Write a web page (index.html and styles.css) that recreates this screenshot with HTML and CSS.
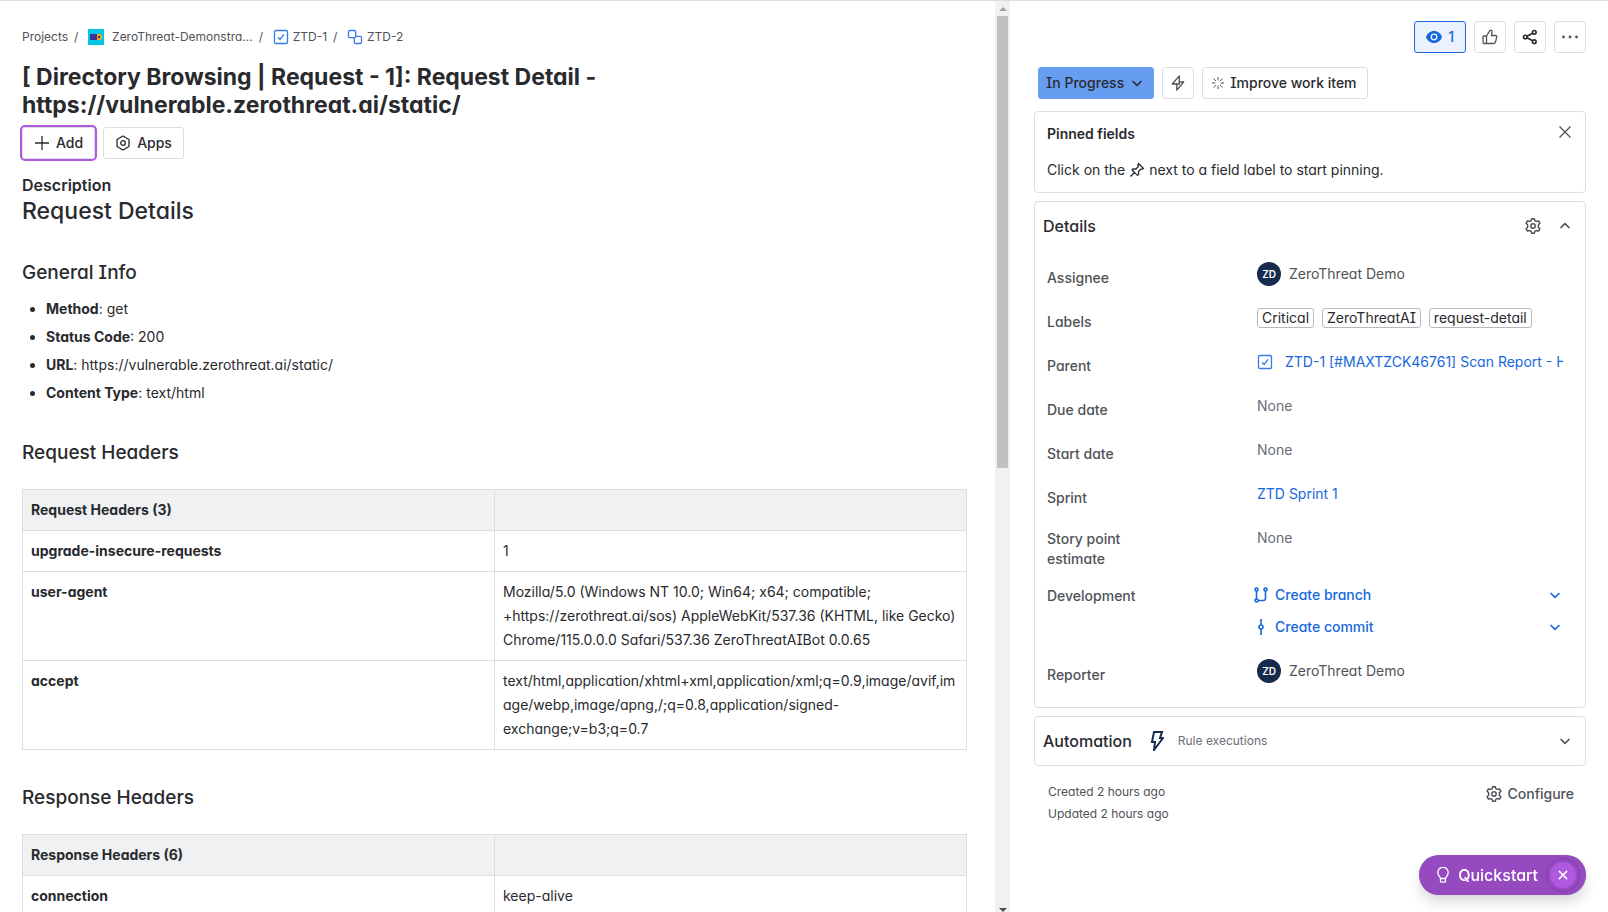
FILE: index.html
```html
<!DOCTYPE html>
<html lang="en">
<head>
<meta charset="utf-8">
<title>ZTD-2</title>
<link rel="stylesheet" href="styles.css">
</head>
<body>
<svg class="defs" aria-hidden="true">
  <symbol id="gear" viewBox="1 1 14 14"><path d="M6.900 1.600h2.200l.5 1.700 1.300.7 1.900-.5 1.200 2-1.300 1.400v2.200l1.300 1.400-1.200 2-1.900-.5-1.300.7-.5 1.700H6.900l-.5-1.700-1.300-.7-1.900.5-1.200-2 1.300-1.400V6.900L2 5.500l1.200-2 1.900.5 1.300-.7z" stroke-linejoin="round"/><circle cx="8" cy="8" r="1.900"/></symbol>
  <symbol id="down" viewBox="0 0 16 16"><path d="M3.500 6 8 10.300 12.500 6"/></symbol>
  <symbol id="up" viewBox="0 0 16 16"><path d="M3.500 10 8 5.700 12.500 10"/></symbol>
  <symbol id="close" viewBox="0 0 16 16"><path d="m2.500 2.500 11 11m0-11-11 11"/></symbol>
  <symbol id="task" viewBox="0 0 16 16"><rect x="1.500" y="1.500" width="13" height="13" rx="1.300"/><path d="m5 8.300 2.100 2.200L11 5.400"/></symbol>
</svg>
<div class="app">
  <main class="issue">
    <nav class="crumbs" aria-label="Breadcrumbs">
      <a href="#">Projects</a><span class="slash">/</span>
      <svg class="project" viewBox="0 0 16 16"><rect width="16" height="16" fill="#00c7e5"/><rect x="2" y="5" width="7" height="6" fill="#403294"/><path d="M9 5h2a3 3 0 0 1 0 6H9z" fill="#ffab00"/><circle cx="11" cy="8" r="1.200" fill="#403294"/></svg>
      <a class="crumb-project" href="#">ZeroThreat-Demonstra...</a><span class="slash">/</span>
      <svg class="icon blue" viewBox="0 0 16 16"><use href="#task"/></svg>
      <a href="#">ZTD-1</a><span class="slash">/</span>
      <svg class="icon blue" viewBox="0 0 16 16"><path d="M8.700 6V2.700a1.200 1.200 0 0 0-1.200-1.200H2.700a1.200 1.200 0 0 0-1.200 1.200v4.800a1.200 1.200 0 0 0 1.200 1.200h6.100M7.300 10v3.300a1.200 1.200 0 0 0 1.200 1.200h4.800a1.200 1.200 0 0 0 1.200-1.200V8.500a1.200 1.200 0 0 0-1.200-1.200H8.700V6M7.300 10V8.700"/></svg>
      <a href="#">ZTD-2</a>
    </nav>
    <h1>[ Directory Browsing | Request - 1]: Request Detail - https://vulnerable.zerothreat.ai/static/</h1>
    <div class="actions">
      <button class="btn focused"><svg class="icon" viewBox="0 0 16 16"><path d="M8 1v14M1 8h14"/></svg>Add</button>
      <button class="btn"><svg class="icon" viewBox="0 0 16 16"><path d="m8 1 6 3.500v7L8 15l-6-3.500v-7z" stroke-linejoin="round"/><circle cx="8" cy="8" r="2.300"/></svg>Apps</button>
    </div>
    <h2 class="label">Description</h2>
    <h2 class="doc-title">Request Details</h2>
    <h3>General Info</h3>
    <ul>
      <li><strong>Method</strong>: get</li>
      <li><strong>Status Code</strong>: 200</li>
      <li><strong>URL</strong>: https://vulnerable.zerothreat.ai/static/</li>
      <li><strong>Content Type</strong>: text/html</li>
    </ul>
    <h3>Request Headers</h3>
    <table>
      <tr><th class="head">Request Headers (3)</th><th class="head"></th></tr>
      <tr><th>upgrade-insecure-requests</th><td>1</td></tr>
      <tr><th>user-agent</th><td>Mozilla/5.0 (Windows NT 10.0; Win64; x64; compatible; +https://zerothreat.ai/sos) AppleWebKit/537.36 (KHTML, like Gecko) Chrome/115.0.0.0 Safari/537.36 ZeroThreatAIBot 0.0.65</td></tr>
      <tr><th>accept</th><td>text/html,application/xhtml+xml,application/xml;q=0.9,image/avif,image/webp,image/apng,/;q=0.8,application/signed-exchange;v=b3;q=0.7</td></tr>
    </table>
    <h3>Response Headers</h3>
    <table>
      <tr><th class="head">Response Headers (6)</th><th class="head"></th></tr>
      <tr><th>connection</th><td>keep-alive</td></tr>
    </table>
  </main>
  <div class="scrollbar" aria-hidden="true"><span class="arrow-up"></span><span class="thumb"></span><span class="arrow-down"></span></div>
  <aside class="side">
    <div class="toolbar">
      <button class="btn watching"><svg class="icon" viewBox="0 0 16 16"><path d="M8 2C4 2 1.300 4.500 0 8c1.300 3.500 4 6 8 6s6.700-2.500 8-6c-1.300-3.500-4-6-8-6z" fill="currentColor" stroke="none"/><circle cx="8" cy="8" r="2.800" stroke="#e9f2fe"/></svg>1</button>
      <button class="btn square" aria-label="Like"><svg class="icon" viewBox="0 0 16 16"><path d="M4.500 7H2a1 1 0 0 0-1 1v5.500a1 1 0 0 0 1 1h9.500a2 2 0 0 0 2-1.600l1.200-4.700A1.200 1.200 0 0 0 13.500 6.500H9.500l.6-3.600C10.300 1.500 8.500.6 7.700 1.900L4.500 7v7.500" stroke-linejoin="round"/></svg></button>
      <button class="btn square dark" aria-label="Share"><svg class="icon bold" viewBox="0 0 16 16"><circle cx="3.300" cy="8" r="1.800"/><circle cx="12.300" cy="3.300" r="1.800"/><circle cx="12.300" cy="12.700" r="1.800"/><path d="m5 7.200 5.700-3M5 8.800l5.700 3"/></svg></button>
      <button class="btn square" aria-label="More actions"><svg class="icon" viewBox="0 0 16 16"><g fill="currentColor" stroke="none"><circle cx="1.500" cy="8" r="1.400"/><circle cx="8" cy="8" r="1.400"/><circle cx="14.500" cy="8" r="1.400"/></g></svg></button>
    </div>
    <div class="status-row">
      <button class="btn status">In Progress<svg class="icon chev" viewBox="0 0 16 16"><use href="#down"/></svg></button>
      <button class="btn square" aria-label="Automation"><svg class="icon" viewBox="0 0 16 16"><path d="M9.300.8 2.300 9h4.500v6.200L13.700 7H9.300z" stroke-linejoin="round"/><path d="M6.800 9h2.500V7"/></svg></button>
      <button class="btn improve"><svg class="icon small" viewBox="0 0 16 16"><path d="M8 0v4.500M8 11.500V16M0 8h4.500M11.500 8H16M2 2l3.500 3.500M10.500 10.500 14 14M2 14l3.500-3.500M10.500 5.500 14 2"/></svg>Improve work item</button>
    </div>
    <section class="panel pinned">
      <div class="pinned-head"><h2>Pinned fields</h2><button class="plain" aria-label="Close"><svg class="icon" viewBox="0 0 16 16"><use href="#close"/></svg></button></div>
      <p>Click on the <svg class="icon pin" viewBox="0 0 16 16"><path d="m9.500 1.500 5 5-1.500.8-1-.3-2.500 2.500.2 2.700-1.200 1.200L3 8l1.200-1.200 2.700.2L9.400 4.500l-.5-1.300zM5.500 10.500 1.500 14.500" stroke-linejoin="round"/></svg> next to a field label to start pinning.</p>
    </section>
    <section class="panel details">
      <header class="panel-head"><h2>Details</h2><button class="plain push" aria-label="Settings"><svg class="icon" viewBox="0 0 16 16"><use href="#gear"/></svg></button><button class="plain" aria-label="Collapse"><svg class="icon chev" viewBox="0 0 16 16"><use href="#up"/></svg></button></header>
      <dl>
        <div class="field"><dt>Assignee</dt><dd><span class="avatar">ZD</span>ZeroThreat Demo</dd></div>
        <div class="field"><dt>Labels</dt><dd class="tags"><span class="tag">Critical</span><span class="tag">ZeroThreatAI</span><span class="tag">request-detail</span></dd></div>
        <div class="field"><dt>Parent</dt><dd class="parent"><svg class="icon blue" viewBox="0 0 16 16"><use href="#task"/></svg><a href="#">ZTD-1 [#MAXTZCK46761] Scan Report - H</a></dd></div>
        <div class="field"><dt>Due date</dt><dd class="none">None</dd></div>
        <div class="field"><dt>Start date</dt><dd class="none">None</dd></div>
        <div class="field"><dt>Sprint</dt><dd><a href="#">ZTD Sprint 1</a></dd></div>
        <div class="field tall"><dt>Story point estimate</dt><dd class="none">None</dd></div>
        <div class="field dev"><dt>Development</dt><dd>
          <div class="dev-row"><a href="#"><svg class="icon bold" viewBox="0 0 16 16"><circle cx="3.500" cy="2.500" r="1.500"/><circle cx="12.500" cy="2.500" r="1.500"/><circle cx="3.500" cy="13.500" r="1.500"/><path d="M3.500 4v8M12.500 4v7.500a2 2 0 0 1-2 2H5"/></svg>Create branch</a><button class="plain" aria-label="Branch options"><svg class="icon chev" viewBox="0 0 16 16"><use href="#down"/></svg></button></div>
          <div class="dev-row"><a href="#"><svg class="icon bold" viewBox="0 0 16 16"><circle cx="8" cy="8" r="2"/><path d="M8 0v6M8 10v6"/></svg>Create commit</a><button class="plain" aria-label="Commit options"><svg class="icon chev" viewBox="0 0 16 16"><use href="#down"/></svg></button></div>
        </dd></div>
        <div class="field"><dt>Reporter</dt><dd><span class="avatar">ZD</span>ZeroThreat Demo</dd></div>
      </dl>
    </section>
    <section class="panel automation">
      <h2>Automation</h2>
      <svg class="bolt" viewBox="0 0 14 20"><path d="M4 1h8l-2 6h3L4 19l1-8H2z"/></svg>
      <span class="rule">Rule executions</span>
      <button class="plain push" aria-label="Expand"><svg class="icon chev" viewBox="0 0 16 16"><use href="#down"/></svg></button>
    </section>
    <footer class="meta">
      <div><p>Created 2 hours ago</p><p>Updated 2 hours ago</p></div>
      <button class="plain configure"><svg class="icon" viewBox="0 0 16 16"><use href="#gear"/></svg>Configure</button>
    </footer>
  </aside>
</div>
<div class="quickstart">
  <button class="plain qs-open"><svg class="icon" viewBox="0 0 16 16"><path d="M5.500 11.500c0-1.500-2.700-3-2.700-6a5.200 5.200 0 0 1 10.400 0c0 3-2.700 4.500-2.700 6zM5.500 12v2.200a1 1 0 0 0 1 1h3a1 1 0 0 0 1-1V12" stroke-linejoin="round"/></svg>Quickstart</button>
  <button class="qs-close" aria-label="Dismiss"><svg class="icon" viewBox="0 0 16 16"><use href="#close"/></svg></button>
</div>
</body>
</html>
```

FILE: styles.css
```css
* { box-sizing: border-box; }
body {
  margin: 0;
  background: #fff;
  color: #292a2e;
  font: 400 14px/20px Inter, "Liberation Sans", sans-serif;
  font-feature-settings: "cv11", "cv08";
}
h1, h2, h3, p, ul, dl, dd { margin: 0; }
button { font: inherit; font-feature-settings: inherit; color: inherit; }
a { color: #1868db; text-decoration: none; }
.defs { position: absolute; width: 0; height: 0; }
.icon { width: 16px; height: 16px; flex: none; fill: none; stroke: currentColor; stroke-width: 1.3; }
.icon.bold { stroke-width: 1.6; }
.icon.small { width: 12px; height: 12px; color: #505258; }
.icon.chev { stroke-width: 1.6; }
.blue { color: #357de8; }

.app { display: flex; height: 100vh; overflow: hidden; border-top: 1px solid #ddd; }
.issue { flex: 1; min-width: 0; padding: 26px 28px 0 22px; overflow: hidden; }

.crumbs { display: flex; align-items: center; height: 20px; font-size: 12px; }
.crumbs a { color: #505258; }
.crumbs .icon { margin-right: 4px; }
.crumbs .project { width: 16px; height: 16px; margin-right: 8px; }
.slash { width: 20px; padding-left: 6px; color: #505258; }
h1 { max-width: 640px; margin-top: 16px; font-size: 23px; line-height: 28px; font-weight: 650; }

.btn {
  display: inline-flex; align-items: center; justify-content: center; gap: 6px;
  height: 32px; padding: 0 11px; border: 1px solid #dddee1; border-radius: 3px;
  background: #fff; font-weight: 500;
}
.btn.square { width: 32px; padding: 0; color: #505258; }
.btn.dark { color: #292a2e; }
.actions { display: flex; gap: 8px; margin-top: 8px; }
.focused { outline: 2px solid #af59e1; }
.label { margin-top: 16px; font-size: 16px; line-height: 20px; font-weight: 600; }
.doc-title { margin-top: 2px; font-size: 23px; line-height: 28px; font-weight: 500; }
h3 { margin-top: 36px; font-size: 19px; line-height: 24px; font-weight: 500; }
ul { margin-top: 12px; padding-left: 24px; line-height: 24px; }
li + li { margin-top: 4px; }
strong { font-weight: 650; }

table { width: 100%; margin-top: 24px; border-collapse: collapse; table-layout: fixed; line-height: 24px; }
th, td { height: 41px; padding: 8px; border: 1px solid #dddee1; text-align: left; vertical-align: top; overflow-wrap: anywhere; }
th { font-weight: 650; }
.head { background: #f0f1f2; }

.scrollbar { display: flex; flex-direction: column; align-items: center; width: 15px; background: #f1f1f1; }
.arrow-up { margin: 6px 0 5px; border: 4px solid transparent; border-top: 0; border-bottom-color: #a3a3a3; }
.thumb { width: 11px; height: calc(50% - 4px); background: #c1c1c1; }
.arrow-down { margin-top: auto; border: 4px solid transparent; border-bottom: 0; border-top-color: #505050; }

.side { width: 598px; padding: 20px 22px 0 24px; }
.toolbar { display: flex; justify-content: flex-end; gap: 8px; }
.watching { border-color: #1868db; background: #e9f2fe; color: #1868db; }
.status-row { display: flex; gap: 8px; margin: 14px 0 12px; padding-left: 4px; }
.status { gap: 5px; border-color: #669df1; background: #669df1; padding: 0 8px 0 7px; }
.improve { padding: 0 10px 0 9px; }

.panel { margin-bottom: 8px; border: 1px solid #dddee1; border-radius: 4px; }
.pinned { padding: 10px 12px 12px; }
.pinned-head { display: flex; justify-content: space-between; }
.pinned-head h2 { margin-top: 2px; font-size: 14px; line-height: 20px; font-weight: 600; }
.pinned p { margin-top: 16px; }
.pin { vertical-align: -3px; }
.plain { display: inline-flex; align-items: center; gap: 8px; padding: 0; border: 0; background: none; color: #505258; }
.pinned-head .plain { height: 20px; }
.push { margin-left: auto; }
.panel-head { display: flex; align-items: center; gap: 16px; height: 48px; padding: 0 12px 0 8px; }
.panel-head h2, .automation h2 { font-size: 16px; line-height: 20px; font-weight: 500; }

dl { padding: 8px 22px 8px 12px; }
.field { display: grid; grid-template-columns: 210px 1fr; height: 44px; }
dt { max-width: 100px; padding-top: 10px; color: #505258; font-weight: 500; line-height: 20px; }
dd { display: flex; align-items: center; min-width: 0; height: 32px; color: #505258; }
.tall { height: 57px; }
.tall dt { padding-top: 7px; }
.dev { height: 76px; }
.dev dt { padding-top: 7px; }
.none { color: #6b6e76; }
.avatar { width: 24px; height: 24px; margin-right: 8px; border-radius: 50%; background: #172b4d; color: #fff; font-size: 10px; line-height: 24px; font-weight: 600; text-align: center; }
.tags { gap: 8px; }
.tag { padding: 0 4px; border: 1px solid #b7b9be; border-radius: 3px; color: #292a2e; line-height: 18px; }
.parent a { margin-left: 12px; white-space: nowrap; overflow: hidden; }
.dev dd { display: block; height: 64px; }
.dev-row { display: flex; justify-content: space-between; align-items: center; height: 32px; }
.dev-row a { display: flex; align-items: center; gap: 6px; margin-left: -4px; font-weight: 500; }
.dev-row .plain { color: #1868db; }

.automation { display: flex; align-items: center; height: 50px; padding: 0 12px 0 8px; }
.bolt { width: 14px; height: 20px; margin: 0 14px 0 18px; fill: none; stroke: #172b4d; stroke-width: 2; }
.rule { color: #6b6e76; font-size: 12px; }
.meta { display: flex; justify-content: space-between; align-items: flex-start; padding: 7px 12px 0 14px; color: #505258; font-size: 12px; line-height: 22px; }
.configure { height: 26px; gap: 6px; font-size: 14px; font-weight: 500; }

.quickstart { position: fixed; right: 22px; bottom: 17px; display: flex; align-items: center; gap: 12px; height: 40px; padding: 0 10px 0 16px; border-radius: 20px; background: #964ac0; box-shadow: 0 8px 12px rgba(30, 31, 33, .15), 0 0 1px rgba(30, 31, 33, .31); }
.qs-open { gap: 7px; color: #fff; font-size: 16px; font-weight: 500; }
.qs-close { display: flex; align-items: center; justify-content: center; width: 26px; height: 26px; padding: 0; border: 0; border-radius: 50%; outline: 1px solid #803fa5; outline-offset: 3px; background: #af59e1; color: #fff; }
.qs-close .icon { width: 12px; height: 12px; stroke-width: 2; }
```
